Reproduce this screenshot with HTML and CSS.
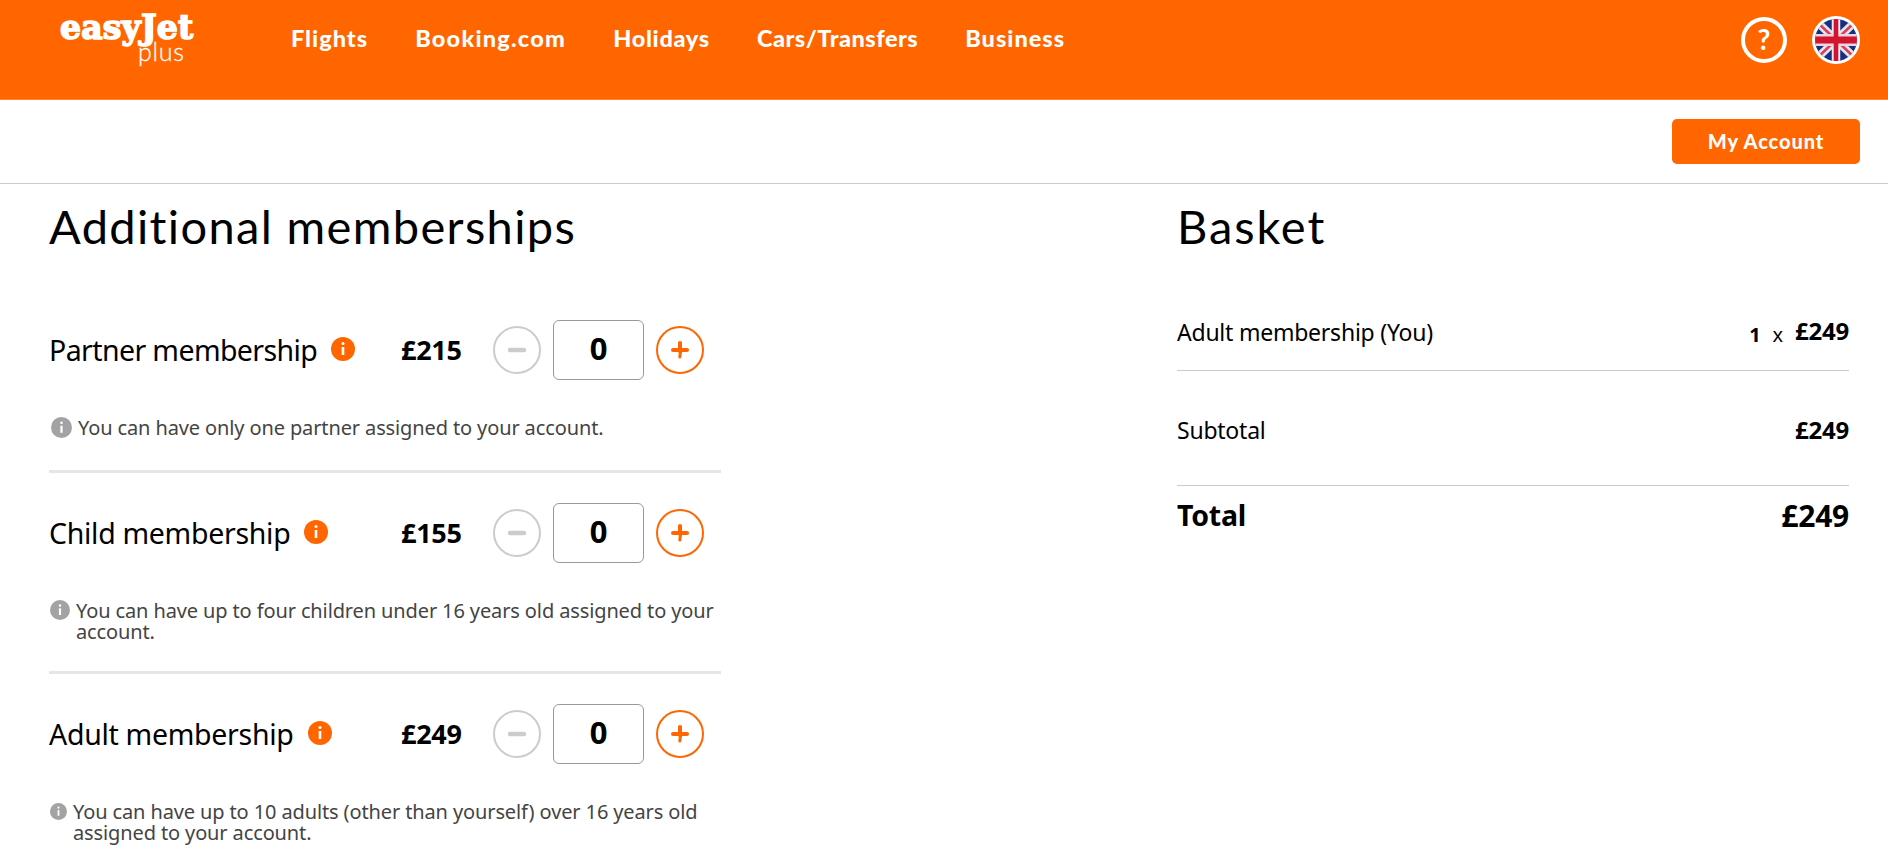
FILE: index.html
```html
<!DOCTYPE html>
<html lang="en">
<head>
    <meta charset="UTF-8">
    <meta name="viewport" content="width=device-width, initial-scale=1.0">
    <title>easyJet plus</title>
    <link rel="stylesheet" href="styles.css">
</head>
<body>
<!-- shared icons -->
<svg class="sprite" width="0" height="0">
    <symbol id="info" viewBox="0 0 24 24">
        <circle cx="12" cy="12" r="12" fill="currentColor"/>
        <circle cx="12" cy="6.6" r="1.5" fill="#fff"/>
        <path d="M12 10v8" stroke="#fff" stroke-width="2.6"/>
    </symbol>
    <symbol id="minus" viewBox="0 0 48 48">
        <circle cx="24" cy="24" r="23" fill="none" stroke="currentColor" stroke-width="2"/>
        <path d="M17 24h14" stroke="currentColor" stroke-width="4.4" stroke-linecap="round"/>
    </symbol>
    <symbol id="plus" viewBox="0 0 48 48">
        <circle cx="24" cy="24" r="23" fill="none" stroke="currentColor" stroke-width="2"/>
        <path d="M17 24h14" stroke="currentColor" stroke-width="4" stroke-linecap="round"/>
        <path d="M24 17v8" stroke="currentColor" stroke-width="4" stroke-linecap="round"/>
        <path d="M24.6 25l-.8 6" stroke="currentColor" stroke-width="3" stroke-linecap="round"/>
    </symbol>
</svg>

<header class="header">
    <a class="logo">
        <span class="logo-name">easyJet</span>
        <span class="logo-sub">plus</span>
    </a>
    <nav class="nav">
        <a class="nav-flights">Flights</a>
        <a class="nav-booking">Booking.com</a>
        <a class="nav-holidays">Holidays</a>
        <a class="nav-cars">Cars/Transfers</a>
        <a class="nav-business">Business</a>
    </nav>
    <div class="tools">
        <a class="help">?</a>
        <svg class="flag" viewBox="0 0 48 48">
            <clipPath id="round"><circle cx="24" cy="24" r="21"/></clipPath>
            <circle cx="24" cy="24" r="24" fill="#fff"/>
            <g clip-path="url(#round)">
                <path fill="#16307f" d="M0 0h48v48H0z"/>
                <path d="M4 5l40 38M44 5L4 43" stroke="#e4e4f2" stroke-width="8"/>
                <path d="M4 5l40 38M44 5L4 43" stroke="#dd4055" stroke-width="2.6"/>
                <path d="M24 0v48" stroke="#f0e6f0" stroke-width="8.5"/>
                <path d="M0 24h48" stroke="#e8d5e0" stroke-width="12"/>
                <path d="M24 0v48" stroke="#cf142f" stroke-width="4.6"/>
                <path d="M0 24h48" stroke="#d3152f" stroke-width="7"/>
            </g>
        </svg>
    </div>
</header>

<div class="account-bar">
    <button class="account">My Account</button>
</div>

<main class="main">
    <section class="memberships">
        <h1>Additional memberships</h1>

        <div class="item">
            <div class="row">
                <h3>Partner membership <svg class="info"><use href="#info"/></svg></h3>
                <span class="price">£215</span>
                <svg class="btn off"><use href="#minus"/></svg>
                <span class="qty">0</span>
                <svg class="btn"><use href="#plus"/></svg>
            </div>
            <div class="note">
                <svg class="note-icon"><use href="#info"/></svg>
                <p>You can have only one partner assigned to your account.</p>
            </div>
        </div>

        <div class="item child">
            <div class="row">
                <h3>Child membership <svg class="info"><use href="#info"/></svg></h3>
                <span class="price">£155</span>
                <svg class="btn off"><use href="#minus"/></svg>
                <span class="qty">0</span>
                <svg class="btn"><use href="#plus"/></svg>
            </div>
            <div class="note">
                <svg class="note-icon"><use href="#info"/></svg>
                <p>You can have up to four children under 16 years old assigned to your<br>account.</p>
            </div>
        </div>

        <div class="item adult">
            <div class="row">
                <h3>Adult membership <svg class="info"><use href="#info"/></svg></h3>
                <span class="price">£249</span>
                <svg class="btn off"><use href="#minus"/></svg>
                <span class="qty">0</span>
                <svg class="btn"><use href="#plus"/></svg>
            </div>
            <div class="note">
                <svg class="note-icon"><use href="#info"/></svg>
                <p>You can have up to 10 adults (other than yourself) over 16 years old<br>assigned to your account.</p>
            </div>
        </div>
    </section>

    <section class="basket">
        <h1>Basket</h1>
        <div class="line you">
            <span>Adult membership (You)</span>
            <div class="sum"><b class="count">1</b><span class="times">x</span><b class="amount">£249</b></div>
        </div>
        <div class="line subtotal">
            <span>Subtotal</span>
            <b class="amount">£249</b>
        </div>
        <div class="line total">
            <b>Total</b>
            <b class="grand">£249</b>
        </div>
    </section>
</main>
</body>
</html>
```
FILE: styles.css
```css
* {margin:0; padding:0; box-sizing:border-box;}
body {background:#fff; color:#000; font-family:"Noto Sans", sans-serif; overflow:hidden;}
svg {display:block; flex:none;}
.sprite {display:none;}

/* header */
.header {display:flex; align-items:flex-start; height:100px; padding:0 28px 0 60px; background:#ff6600; border-bottom:1px solid #ff8533; color:#fff; font-family:Lato, sans-serif;}
.logo {display:flex; flex-direction:column; width:231px; padding-top:9px;}
.logo-name {font:bold 33px/38px "DejaVu Serif", serif; letter-spacing:.2px; -webkit-text-stroke:1.6px #fff; white-space:nowrap;}
.logo-sub {padding-left:78px; font-size:25px; line-height:24px; font-weight:300; -webkit-text-stroke:.3px #fff; margin-top:-8px; letter-spacing:.7px;}
.nav {display:flex; gap:47px; padding-top:25px; font-size:23.5px; line-height:27px; font-weight:900; white-space:nowrap;}
.nav-flights {letter-spacing:1px;}
.nav-booking {letter-spacing:1.23px;}
.nav-holidays {letter-spacing:.7px;}
.nav-cars {letter-spacing:.5px;}
.nav-business {letter-spacing:1px;}
.tools {display:flex; align-items:center; gap:25px; margin-left:auto; padding-top:16px;}
.help {width:46px; height:46px; border:4px solid #fff; border-radius:50%; font-size:28px; line-height:36px; font-weight:bold; text-align:center;}
.flag {width:48px; height:48px;}

/* account bar */
.account-bar {display:flex; justify-content:flex-end; align-items:flex-start; height:84px; padding:19px 28px 0; border-bottom:1px solid #ccc;}
.account {width:188px; height:45px; padding-bottom:2px; border:0; border-radius:5px; background:#ff6600; color:#fff; font:900 20px Lato, sans-serif; letter-spacing:.9px;}

/* content */
.main {display:flex; justify-content:space-between; padding:14px 39px 0 49px;}
h1 {font:normal 47px/56px Lato, sans-serif; white-space:nowrap;}
.memberships {width:672px;}
.memberships h1 {letter-spacing:1.35px; margin-bottom:66px;}
.item {height:153px; margin-bottom:30px; border-bottom:3px solid #e6e6e6;}
.item.child {height:171px;}
.item.adult {border:0; margin:0; height:154px;}
.row {display:flex; align-items:center; height:60px;}
h3 {display:flex; align-items:center; gap:14px; width:352px; font-size:28.5px; line-height:40px; font-weight:normal; letter-spacing:-.6px; white-space:nowrap;}
.child h3, .adult h3 {letter-spacing:-.3px;}
.info {width:24px; height:24px; color:#ff6600; margin-top:-3px;}
.price {width:92px; padding-bottom:2px; font-size:27px; font-weight:bold; letter-spacing:-.3px;}
.btn {width:48px; height:48px; color:#ff6600;}
.btn.off {color:#ccc;}
.qty {width:91px; height:60px; margin:0 12px; border:1px solid #999; border-radius:6px; font-size:31px; line-height:55px; font-weight:bold; text-align:center;}
.note {display:flex; align-items:flex-start; gap:6px; margin-top:37px; padding-left:2px; color:#444; font-size:20px; line-height:21px; letter-spacing:-.12px; white-space:nowrap;}
.note-icon {width:21px; height:21px; color:#a3a3a3;}
.child .note {padding-left:1px;}
.child .note-icon {width:20px; height:20px;}
.adult .note {padding-left:1px;}
.adult .note-icon {width:17px; height:17px; margin-top:2px;}

/* basket */
.basket {width:672px;}
.basket h1 {letter-spacing:1.9px;}
.line {display:flex; justify-content:space-between; align-items:center; font-size:23px; letter-spacing:-.23px;}
.you {height:117px; padding-top:40px; border-bottom:1px solid #ccc;}
.subtotal {height:115px; padding-top:3px; border-bottom:1px solid #ccc;}
.total {height:56px; padding-top:2px; font-size:28.5px;}
.grand {font-size:30px;}
.sum {display:flex; align-items:baseline;}
.count, .times {font-size:20px; margin-right:12px;}
.amount {font-size:24px; letter-spacing:-.2px;}
.sum .amount {position:relative; top:-2px;}
```
